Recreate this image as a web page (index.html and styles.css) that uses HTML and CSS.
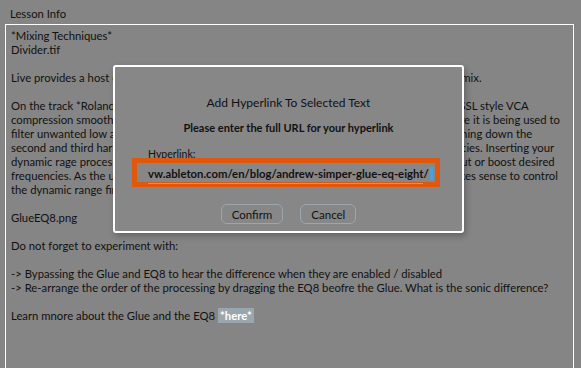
FILE: index.html
```html
<!DOCTYPE html>
<html lang="en">
<head>
    <meta charset="UTF-8">
    <title>Lesson Info</title>
    <link rel="stylesheet" href="styles.css">
</head>
<body>
    <div class="lesson-panel">
        <div class="panel-title">Lesson Info</div>

        <div class="editor">
            <p>*Mixing Techniques*<br>Divider.tif</p>
            <p>Live provides a host of powerful audio effects you can then use to shape the sound of your mix.</p>
            <p>
                On the track *Roland Drums* you will find the Glue Compressor, which gives you a punchy SSL style VCA<br>
                compression smoothing out the transients of a drum bus. The EQ Eight then follows it, where it is being used to<br>
                filter unwanted low and high frequencies. Experiment a bit with carefully boosting and notching down the<br>
                second and third harmonics to shape the tone of the kit, then try cutting unwanted frequencies. Inserting your<br>
                dynamic rage processor before the EQ means that it will react to any frequencies that you cut or boost desired<br>
                frequencies. As the upper harmonics are being boosted by the glue compressor, it really makes sense to control<br>
                the dynamic range first and shape the tone after.
            </p>
            <p>GlueEQ8.png</p>
            <p>Do not forget to experiment with:</p>
            <p>
                -&gt; Bypassing the Glue and EQ8 to hear the difference when they are enabled / disabled<br>
                -&gt; Re-arrange the order of the processing by dragging the EQ8 beofre the Glue. What is the sonic difference?
            </p>
            <p>Learn mnore about the Glue and the EQ8 <span class="selected">*here*</span></p>
        </div>
    </div>

    <div class="dialog">
        <div class="dialog-title">Add Hyperlink To Selected Text</div>
        <div class="dialog-prompt">Please enter the full URL for your hyperlink</div>

        <div class="field-label">Hyperlink:</div>
        <div class="field-focus">
            <div class="field-input">vw.ableton.com/en/blog/andrew-simper-glue-eq-eight/<span class="caret"></span></div>
        </div>

        <div class="dialog-actions">
            <button class="dialog-button">Confirm</button>
            <button class="dialog-button">Cancel</button>
        </div>
    </div>
</body>
</html>
```

FILE: styles.css
```css
:root {
    --background: #858585;
    --text: #111111;
    --border: #ffffff;
    --accent: #e0580c;
    --soft-blue: #9aa6ae;
}

* {
    margin: 0;
    padding: 0;
    box-sizing: border-box;
}

body {
    background: var(--background);
    color: var(--text);
    font-family: 'Lato', 'Liberation Sans', sans-serif;
    font-size: 11.3px;
    overflow: hidden;
    height: 368px;
}

.lesson-panel {
    padding: 0 7px 0 5px;
}

.panel-title {
    height: 24px;
    line-height: 28px;
    padding-left: 5px;
}

.editor {
    border: 1px solid var(--border);
    border-bottom: none;
    height: 344px;
    overflow: hidden;
    padding: 4px 5px;
    line-height: 14px;
    white-space: nowrap;
}

.editor p {
    margin-bottom: 14px;
}

.selected {
    background: var(--soft-blue);
    color: #ffffff;
    font-weight: bold;
    padding: 1px 2px;
}

/* modal sits over the lesson text */
.dialog {
    position: absolute;
    left: 113px;
    top: 65px;
    width: 351px;
    height: 168px;
    background: #878787;
    border: 2px solid var(--border);
    border-radius: 3px;
    box-shadow: 2px 3px 6px rgba(0, 0, 0, 0.25);
    display: flex;
    flex-direction: column;
    align-items: center;
}

.dialog-title {
    margin-top: 28px;
    font-size: 12px;
}

.dialog-prompt {
    margin-top: 11px;
    font-weight: bold;
    font-size: 11px;
}

.field-label {
    align-self: flex-start;
    margin: 14px 0 0 33px;
    font-size: 10.5px;
    line-height: 13px;
}

.field-focus {
    align-self: flex-start;
    width: 308px;
    height: 29px;
    margin: -3px 0 0 17px;
    border: 5px solid var(--accent);
    padding: 2px 12px 0 11px;
}

.field-input {
    border-bottom: 1px solid var(--soft-blue);
    font-weight: bold;
    font-size: 11.3px;
    line-height: 18px;
    white-space: nowrap;
}

.caret {
    display: inline-block;
    width: 3px;
    height: 13px;
    background: #4aa3d8;
    vertical-align: -2px;
    margin-left: 1px;
}

.dialog-actions {
    display: flex;
    gap: 17px;
    margin-top: 17px;
}

.dialog-button {
    font-family: inherit;
    font-size: 11.5px;
    color: var(--text);
    background: transparent;
    border: 1px solid var(--soft-blue);
    border-radius: 6px;
    height: 20px;
    padding: 0 10px;
}
```
